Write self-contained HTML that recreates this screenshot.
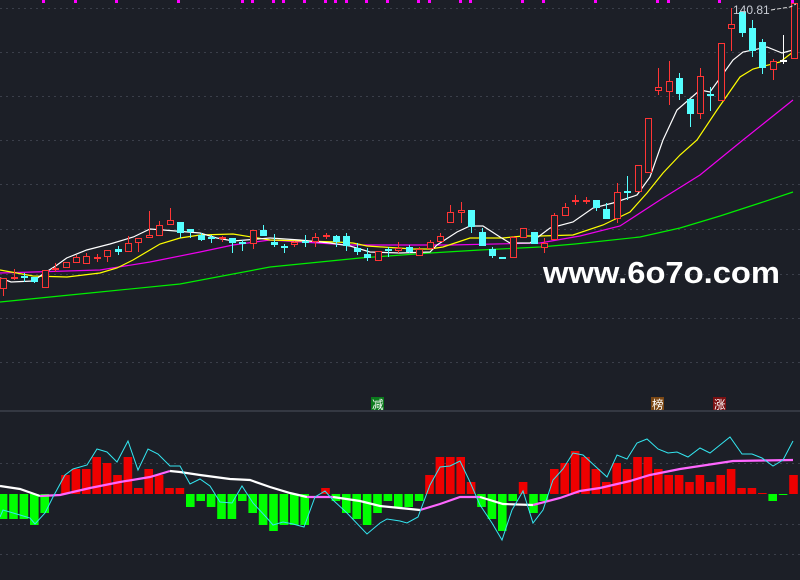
<!DOCTYPE html>
<html><head><meta charset="utf-8"><style>
html,body{margin:0;padding:0;background:#1c1f27;width:800px;height:580px;overflow:hidden}
svg{display:block}
</style></head><body>
<svg id="s" width="800" height="580" xmlns="http://www.w3.org/2000/svg">
<rect width="800" height="580" fill="#1c1f27"/>
<g id="grid" stroke="#3b3f4a" stroke-width="1" stroke-dasharray="2,4"></g>
<line x1="0" y1="411" x2="800" y2="411" stroke="#3c414c" stroke-width="1.5"/>
<g id="ticks" fill="#ff00ff"></g>
<g id="ma"></g>
<g id="candles"></g>
<g id="hist"></g>
<g id="macd"></g>
<text x="733" y="14" font-family="Liberation Sans, sans-serif" font-size="12" fill="#c8ccd4">140.81</text>
<polyline points="771,10 790,7 796,4" fill="none" stroke="#e0e0e0" stroke-width="1" stroke-dasharray="4,2"/>
<text x="543" y="283" font-family="Liberation Sans, sans-serif" font-weight="bold" font-size="31" fill="#ffffff" textLength="237" lengthAdjust="spacingAndGlyphs">www.6o7o.com</text>
<rect x="371" y="397" width="13" height="13" fill="#0b7a1c"/>
<text x="372" y="408.5" font-family="Liberation Sans, Noto Sans CJK SC, sans-serif" font-size="11.5" fill="#fff">减</text>
<rect x="651" y="397" width="13" height="13" fill="#7a4714"/>
<text x="652" y="408.5" font-family="Liberation Sans, Noto Sans CJK SC, sans-serif" font-size="11.5" fill="#fff">榜</text>
<rect x="713" y="397" width="13" height="13" fill="#7a1012"/>
<text x="714" y="408.5" font-family="Liberation Sans, Noto Sans CJK SC, sans-serif" font-size="11.5" fill="#fff">涨</text>
</svg>
<script>
var NS="http://www.w3.org/2000/svg";
function el(p,t,a){var e=document.createElementNS(NS,t);for(var k in a)e.setAttribute(k,a[k]);document.getElementById(p).appendChild(e);return e;}
[8,52,96,140,184,229,274,318,362,463,524,554].forEach(function(y){el('grid','line',{x1:0,y1:y+.5,x2:800,y2:y+.5});});
[43,75,116,178,242,252,273,283,304,325,335,346,366,387,418,429,460,470,522,543,595,657,668,719,792].forEach(function(x){el('ticks','rect',{x:x-1,y:0,width:3,height:3});});
function cx(i){return 3.1+10.4*i;}
function pl(g,pts,col,w){el(g,'polyline',{points:pts,fill:'none',stroke:col,'stroke-width':w||1});}
pl('ma',"0,302 90,293 180,284 270,267 360,258 430,253 480,250 540,247 575,244 640,237 680,228 720,216 760,203 793,192","#00ee00",1.2);
pl('ma',"0,273 100,270 150,262 200,252 233,245 270,240 350,245 450,245 540,243 580,236 620,226 660,200 700,175 743,140 793,100","#ee00ee",1.2);
pl('ma',"0,270 33,276 67,277 100,273 117,268 133,260 160,244 180,238 200,235 233,234 270,240 337,242 353,243 367,246 413,249 430,249 443,247 470,238 503,238 523,236 540,236 573,235 603,225 630,212 647,193 663,173 680,155 697,140 717,110 740,77 753,69 780,62 793,52","#ffff00",1.2);
pl('ma',"0,278 33,282 100,281 133,273 167,266 200,258 260,250 330,244 400,237 450,229 490,230 600,233 650,238 700,241 810,238".replace(/(\d+),(\d+)/g,function(m,a,b){return (a/3)+","+b;}),"#ffffff",1.2);
pl('ma',"270,238 300,240 330,243 350,246 370,252 400,253 430,252 437,245 457,232 470,226 483,226 500,237 510,243 530,243 550,228 573,222 593,208 613,203 637,195 650,177 663,140 677,110 700,90 710,92 733,60 743,52 767,47 782,53 793,50","#ffffff",1.2);
var C=[['r',278,289,278,296],['r',277,279,269,280],['c',276,278,273,282],['c',277,282,277,283],['r',270,288],['r',268,270,263,272],['r',262,268],['r',257,263,255],['r',256,264,253],['r',257,259,254,262],['r',250,257,250,262],['c',249,252,246,255],['r',243,252,236],['r',238,243,238,252],['r',235,238,211],['r',225,236,221],['r',220,225,208],['c',222,233,222,238],['c',229,232,229,238],['c',235,240,233,241],['c',237,239,235,243],['r',237,239,236,242],['c',238,243,238,253],['c',242,244,240,251],['r',230,244,230,249],['c',230,236,225],['c',242,245,234,247],['c',246,248,244,253],['r',242,245,241,247],['c',241,243,235,247],['r',237,242,233,247],['r',235,237,233,239],['c',236,242,235,247],['c',236,246,233,251],['c',248,252,243,255],['c',254,258,248,261],['r',251,261],['c',249,251,247,257],['r',248,251,242,253],['c',247,252,245,253],['r',249,256,247],['r',242,249,240],['r',236,242,233],['r',212,223,205],['r',210,213,202,223],['c',210,227,210,233],['c',232,246,228],['c',249,256,247,258],['c',257,259],['r',237,258,236],['r',228,238],['c',232,244],['r',243,248,238,253],['r',215,240,213],['r',207,216,203],['r',200,202,195,205],['r',200,202,197,204],['c',200,208,200,211],['c',209,219,203],['r',192,219,183,223],['c',191,193,176,200],['r',165,192],['r',118,173],['r',87,91,68,95],['r',81,92,61,105],['c',78,94,73,100],['c',99,114,99,127],['r',76,114,68,119],['c',94,96,87,111],['r',43,101],['r',24,29,8,51],['c',12,33,12,37],['c',28,51,20,57],['c',42,68,39,74],['r',61,70,59,80],['w',60,62,35,64],['r',3,59]];
C.forEach(function(d,i){var x=Math.round(cx(i)),t=d[1],b=d[2],h=d[3]||t,l=d[4]||b;
 var col=d[0]=='r'?'#ff3535':(d[0]=='c'?'#54ffff':'#ffffff');
 el('candles','line',{x1:x+.5,y1:h,x2:x+.5,y2:l,stroke:col,'stroke-width':1});
 if(b-t<=2){el('candles','rect',{x:x-3,y:t,width:7,height:Math.max(b-t,1.5),fill:col});}
 else if(d[0]=='r'){el('candles','rect',{x:x-2.5,y:t+.5,width:6,height:b-t-1,fill:'#1c1f27',stroke:col,'stroke-width':1});}
 else el('candles','rect',{x:x-3,y:t,width:7,height:b-t,fill:col});
});
var H=['g519','g519','g519','g525','g513',0,'r475','r469','r469','r457','r463','r475','r457','r488','r469','r475','r488','r488','g507','g501','g507','g519','g519','g501','g513','g525','g531','g525','g525','g525',0,'r488','g501','g513','g519','g525','g513','g501','g507','g507','g501','r475','r457','r457','r457','r482','g507','g519','g531','g501','r482','g513','g501','r469','r463','r451','r457','r469','r482','r463','r469','r457','r457','r469','r475','r475','r482','r475','r482','r475','r469','r488','r488','r493','g501','g495','r475'];
H.forEach(function(v,i){if(!v)return;var x=cx(i)-4.3,n=+v.slice(1);
 if(v[0]=='r')el('hist','rect',{x:x,y:n,width:8.6,height:494-n,fill:'#ee0000'});
 else el('hist','rect',{x:x,y:494,width:8.6,height:n-494,fill:'#00ff00'});
});
pl('macd',"0,486 20,489 40,496","#ffffff",2.2);
pl('macd',"40,496 60,495 90,488 120,482 150,477 170,471","#ff66ff",2.2);
pl('macd',"170,471 180,472 200,475 230,479 250,480 270,487 290,493 307,497","#ffffff",2.2);
pl('macd',"307,497 333,497","#ff66ff",2.2);
pl('macd',"333,497 360,501 380,506 400,508 420,510","#ffffff",2.2);
pl('macd',"420,510 440,504 460,497 480,497","#ff66ff",2.2);
pl('macd',"480,497 503,504 533,505","#ffffff",2.2);
pl('macd',"533,505 560,498 580,491 600,488 630,481 650,475 680,469 700,466 733,461 793,460","#ff66ff",2.2);
pl('macd',"0,517 3,510 20,515 30,518 35,524 45,513 53,497 65,475 73,469 80,467 87,465 97,449 107,452 117,462 128,441 138,470 148,449 158,454 170,466 180,466 190,484 200,479 210,486 220,502 232,503 242,486 253,503 267,518 273,525 283,522 293,524 304,527 315,497 325,491 333,500 347,513 367,534 380,523 387,519 400,521 407,523 418,517 430,485 440,467 450,466 460,461 470,482 480,505 492,523 502,540 512,510 523,491 533,523 543,510 553,480 563,469 573,453 583,455 607,477 617,455 627,459 637,443 647,439 658,449 668,453 677,452 688,457 700,448 710,453 720,445 730,437 742,454 752,454 762,458 773,466 783,460 793,441","#33e6f0",1);
</script>
</body></html>
